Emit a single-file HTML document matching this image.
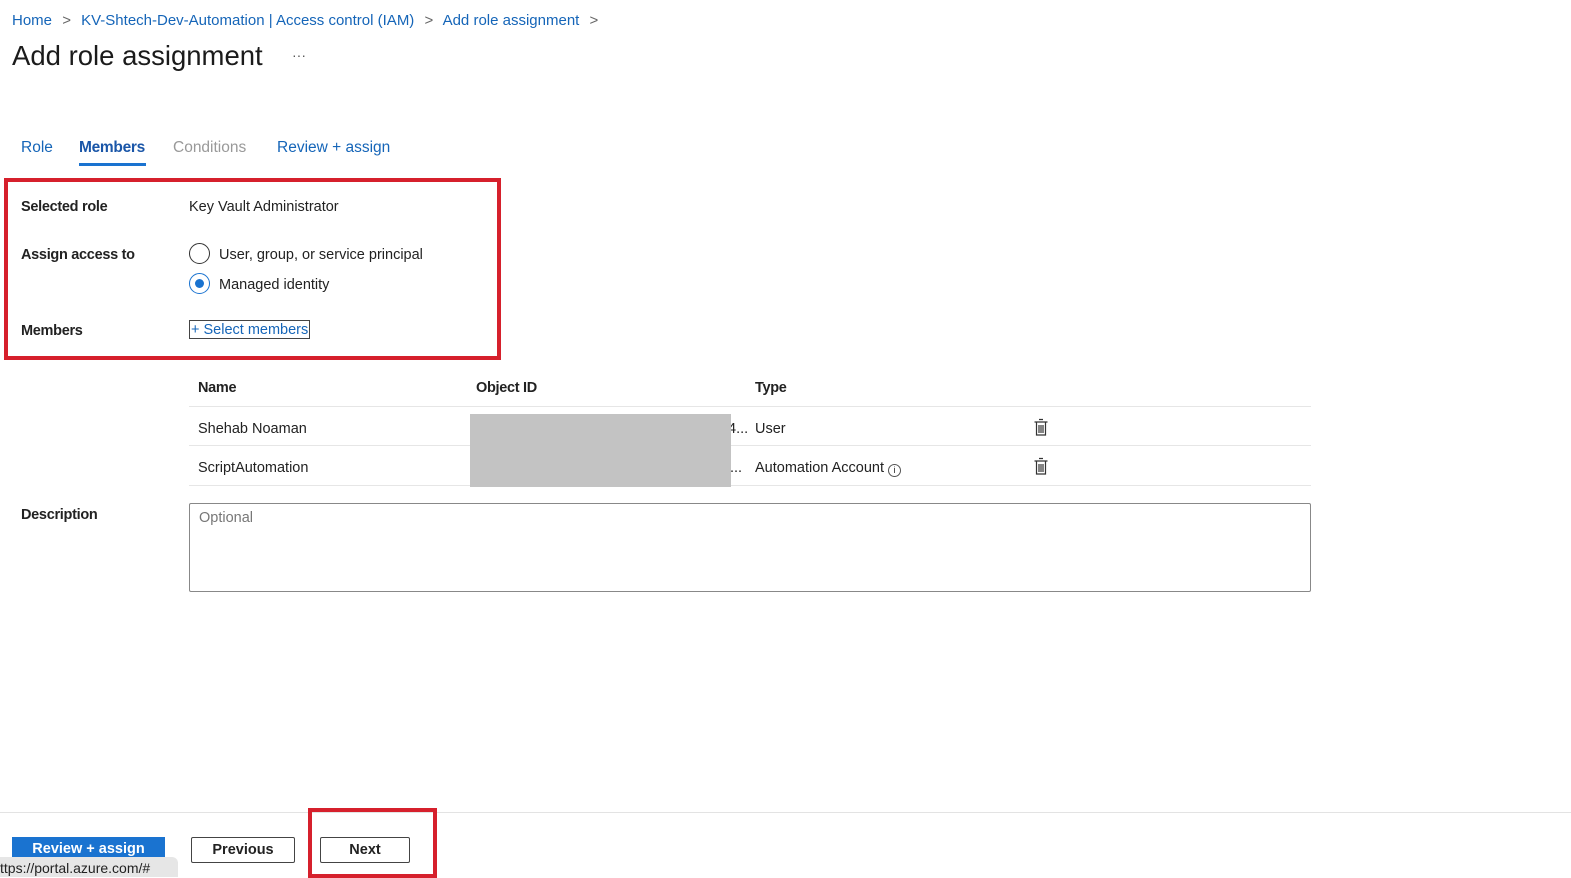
<!DOCTYPE html>
<html><head><meta charset="utf-8"><style>
*{margin:0;padding:0;box-sizing:border-box}
body{width:1571px;height:872px;overflow:hidden;background:#fff;font-family:"Liberation Sans",sans-serif;color:#222;position:relative;font-size:14.5px}
.a{position:absolute;white-space:nowrap}
.blue{color:#1565b8}
.b{font-weight:bold}
.trash{position:absolute;width:14px;height:18px}
</style></head><body>
<div class="a blue" style="left:12px;top:12px;font-size:15px">Home <span style="color:#666;margin:0 6px">&gt;</span> KV-Shtech-Dev-Automation | Access control (IAM) <span style="color:#666;margin:0 6px">&gt;</span> Add role assignment <span style="color:#666;margin:0 6px">&gt;</span></div>
<div class="a" style="left:12px;top:40px;font-size:27.5px;color:#1b1b1b">Add role assignment</div>
<div class="a" style="left:292px;top:47px;font-size:14px;color:#555">···</div>

<div class="a blue" style="left:21px;top:139px;font-size:15.5px">Role</div>
<div class="a" style="left:79px;top:139px;font-size:15.5px;color:#1a56a8;font-weight:bold;letter-spacing:-0.3px">Members</div>
<div class="a" style="left:79px;top:163px;width:67px;height:3px;background:#1a73d0"></div>
<div class="a" style="left:173px;top:139px;font-size:15.5px;color:#999">Conditions</div>
<div class="a blue" style="left:277px;top:139px;font-size:15.5px">Review + assign</div>

<div class="a" style="left:4px;top:178px;width:497px;height:182px;border:4px solid #d6202c"></div>
<div class="a b" style="left:21px;top:199px;letter-spacing:-0.3px">Selected role</div>
<div class="a" style="left:189px;top:199px">Key Vault Administrator</div>
<div class="a b" style="left:21px;top:247px;letter-spacing:-0.3px">Assign access to</div>
<div class="a" style="left:189px;top:243px;width:21px;height:21px;border:1.5px solid #333;border-radius:50%"></div>
<div class="a" style="left:219px;top:247px">User, group, or service principal</div>
<div class="a" style="left:189px;top:273px;width:21px;height:21px;border:1.5px solid #1a73d0;border-radius:50%"></div>
<div class="a" style="left:195px;top:279px;width:9px;height:9px;background:#1a73d0;border-radius:50%"></div>
<div class="a" style="left:219px;top:277px">Managed identity</div>
<div class="a b" style="left:21px;top:323px;letter-spacing:-0.3px">Members</div>
<div class="a blue" style="left:189px;top:320px;width:121px;height:19px;border:1px solid #444;padding-left:1px;line-height:19px">+ Select members</div>

<div class="a b" style="left:198px;top:380px;letter-spacing:-0.3px">Name</div>
<div class="a b" style="left:476px;top:380px;letter-spacing:-0.3px">Object ID</div>
<div class="a b" style="left:755px;top:380px;letter-spacing:-0.3px">Type</div>
<div class="a" style="left:189px;top:406px;width:1122px;height:1px;background:#e6e6e6"></div>
<div class="a" style="left:189px;top:445px;width:1122px;height:1px;background:#e6e6e6"></div>
<div class="a" style="left:189px;top:485px;width:1122px;height:1px;background:#e6e6e6"></div>
<div class="a" style="left:198px;top:421px">Shehab Noaman</div>
<div class="a" style="left:198px;top:460px">ScriptAutomation</div>
<div class="a" style="left:728px;top:421px">4...</div>
<div class="a" style="left:730px;top:460px">...</div>
<div class="a" style="left:470px;top:414px;width:261px;height:73px;background:#c3c3c3"></div>
<div class="a" style="left:755px;top:421px">User</div>
<div class="a" style="left:755px;top:460px">Automation Account <span style="display:inline-block;width:13px;height:13px;border:1px solid #555;border-radius:50%;font-size:9px;text-align:center;line-height:11px;vertical-align:-1px">i</span></div>
<svg class="trash" style="left:1034px;top:418px" viewBox="0 0 14 18"><path d="M5 1.5h4M0.5 4h13M2.5 4v13h9V4M5 7v8M7 7v8M9 7v8" stroke="#333" stroke-width="1.2" fill="none"/></svg>
<svg class="trash" style="left:1034px;top:457px" viewBox="0 0 14 18"><path d="M5 1.5h4M0.5 4h13M2.5 4v13h9V4M5 7v8M7 7v8M9 7v8" stroke="#333" stroke-width="1.2" fill="none"/></svg>

<div class="a b" style="left:21px;top:507px;letter-spacing:-0.3px">Description</div>
<div class="a" style="left:189px;top:503px;width:1122px;height:89px;border:1px solid #888;border-radius:2px"></div>
<div class="a" style="left:199px;top:510px;color:#777">Optional</div>

<div class="a" style="left:0;top:812px;width:1571px;height:1px;background:#e3e3e3"></div>
<div class="a" style="left:12px;top:837px;width:153px;height:35px;background:#1a73d0;color:#fff;font-weight:bold;text-align:center;padding-top:4px">Review + assign</div>
<div class="a" style="left:191px;top:837px;width:104px;height:26px;border:1px solid #444;border-radius:2px;text-align:center;line-height:24px;font-weight:600">Previous</div>
<div class="a" style="left:320px;top:837px;width:90px;height:26px;border:1px solid #444;border-radius:2px;text-align:center;line-height:24px;font-weight:600">Next</div>
<div class="a" style="left:308px;top:808px;width:129px;height:70px;border:4px solid #d6202c"></div>
<div class="a" style="left:0;top:857px;width:178px;height:20px;background:#e6e6e6;border-radius:0 6px 0 0;font-size:14px;line-height:22px;overflow:hidden;color:#222">ttps://portal.azure.com/#</div>
</body></html>
